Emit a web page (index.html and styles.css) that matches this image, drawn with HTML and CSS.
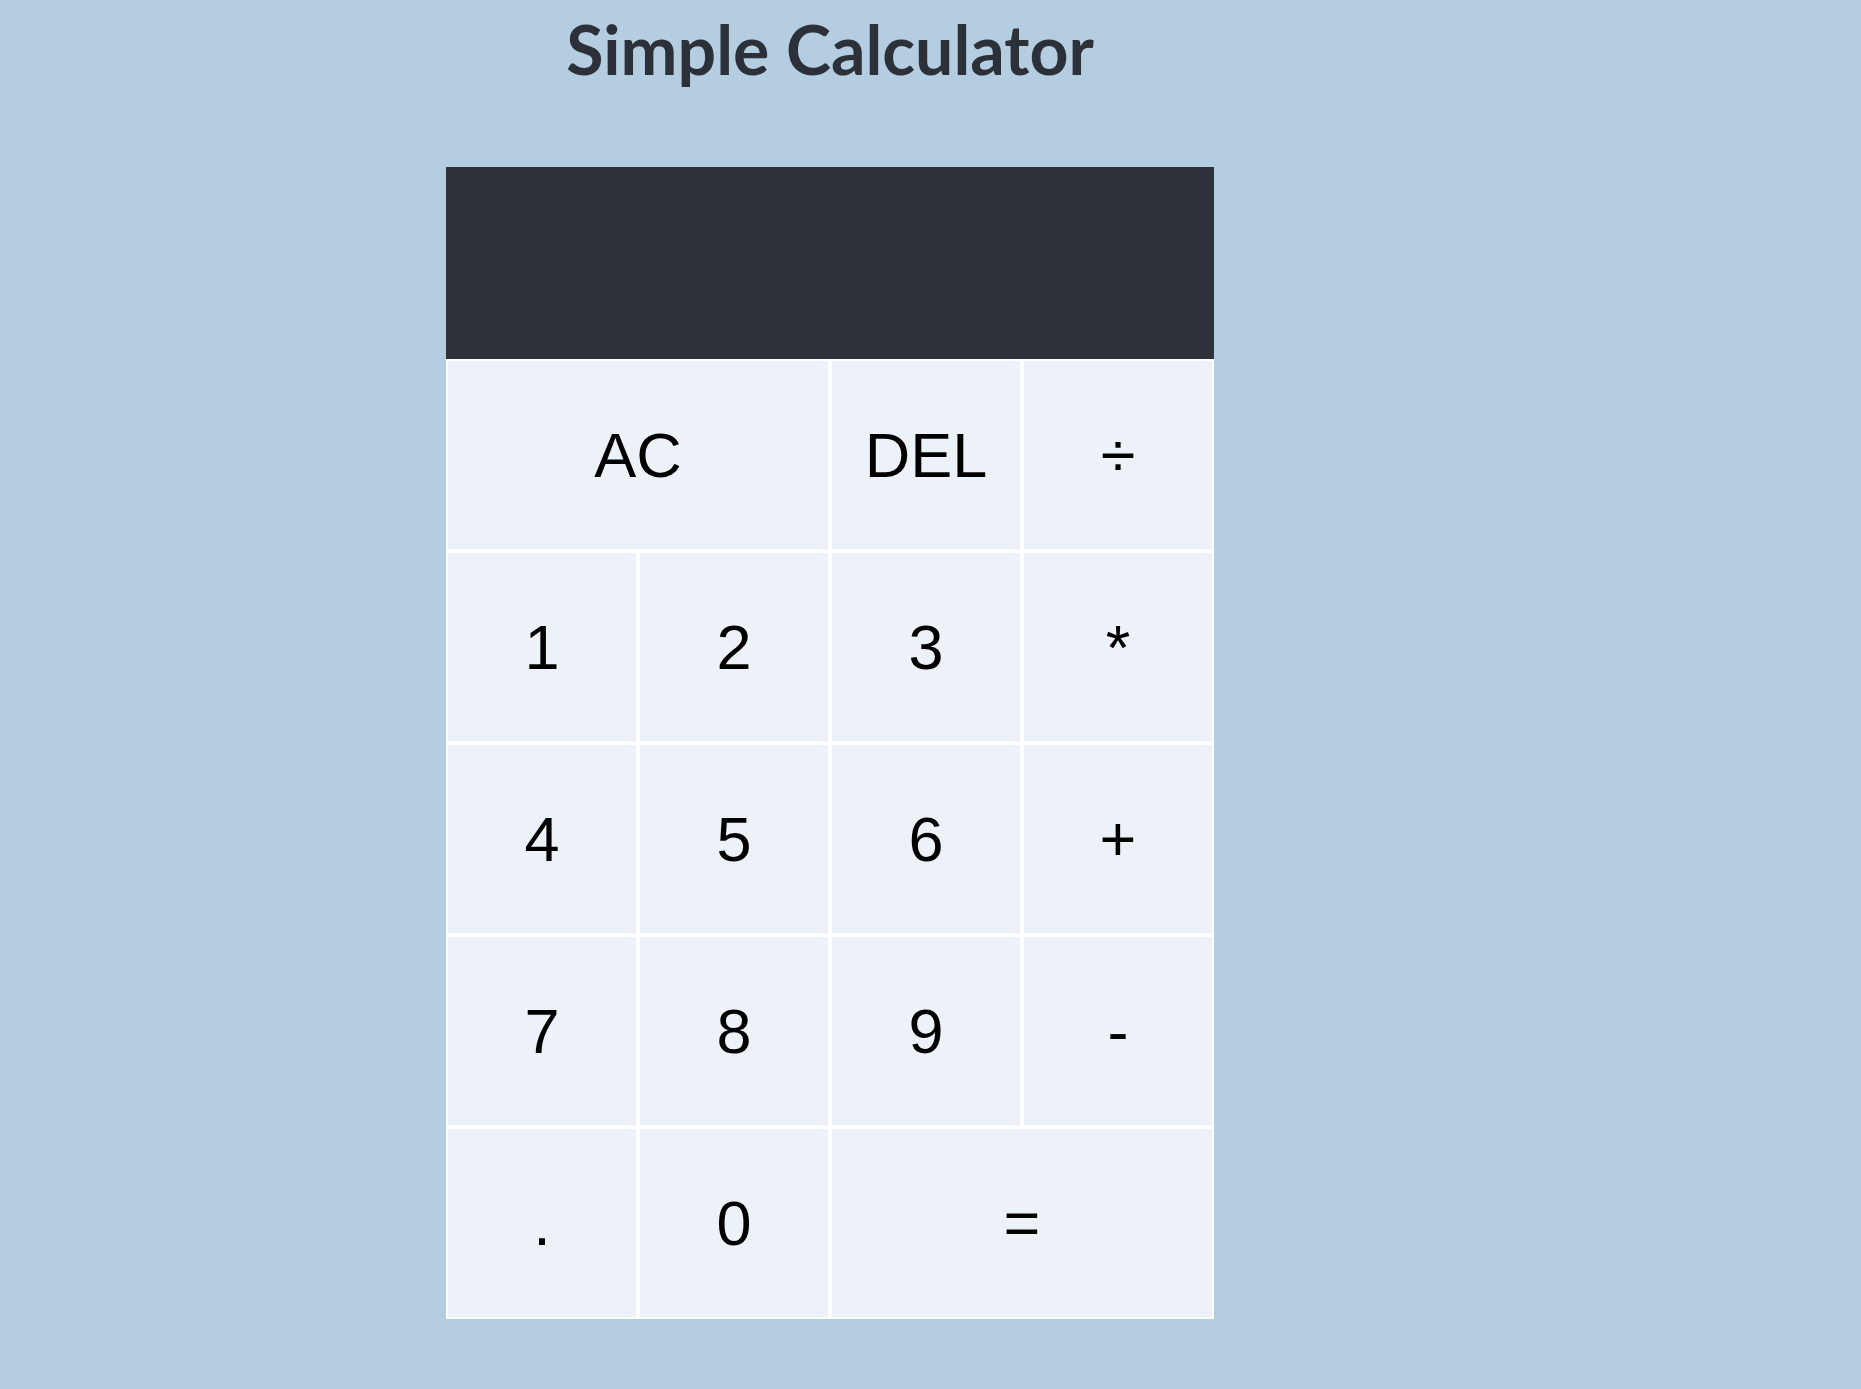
FILE: index.html
```html
<!DOCTYPE html>
<html>
<head>
<meta charset="utf-8">
<title>Simple Calculator</title>
<link rel="stylesheet" href="styles.css">
</head>
<body>
<main class="page">
  <h1 class="title">Simple Calculator</h1>
  <div class="calculator">
    <div class="output"></div>
    <button class="btn span-two">AC</button>
    <button class="btn">DEL</button>
    <button class="btn">÷</button>
    <button class="btn">1</button>
    <button class="btn">2</button>
    <button class="btn">3</button>
    <button class="btn">*</button>
    <button class="btn">4</button>
    <button class="btn">5</button>
    <button class="btn">6</button>
    <button class="btn">+</button>
    <button class="btn">7</button>
    <button class="btn">8</button>
    <button class="btn">9</button>
    <button class="btn">-</button>
    <button class="btn">.</button>
    <button class="btn">0</button>
    <button class="btn span-two">=</button>
  </div>
</main>
</body>
</html>
```
FILE: styles.css
```css
* { box-sizing: border-box; }
body {
  margin: 0;
  background: #b4cde0;
  min-height: 100vh;
}
.page {
  width: 1660px;
  display: flex;
  flex-direction: column;
  align-items: center;
}
.title {
  margin: 0;
  padding-top: 7px;
  font-family: Lato, "Open Sans", sans-serif;
  font-weight: 700;
  font-size: 68px;
  line-height: 84px;
  color: #2c3038;
}
.calculator {
  margin-top: 76px;
  display: grid;
  grid-template-columns: repeat(4, 192px);
  grid-template-rows: repeat(6, 192px);
}
.output {
  grid-column: 1 / -1;
  background: #2e333b;
}
.btn {
  margin: 0;
  padding: 0;
  border: 2px solid #ffffff;
  background: #edf1f8;
  color: #000;
  font-family: "Liberation Sans", Arial, sans-serif;
  font-size: 63px;
  cursor: pointer;
}
.span-two { grid-column: span 2; }
```
